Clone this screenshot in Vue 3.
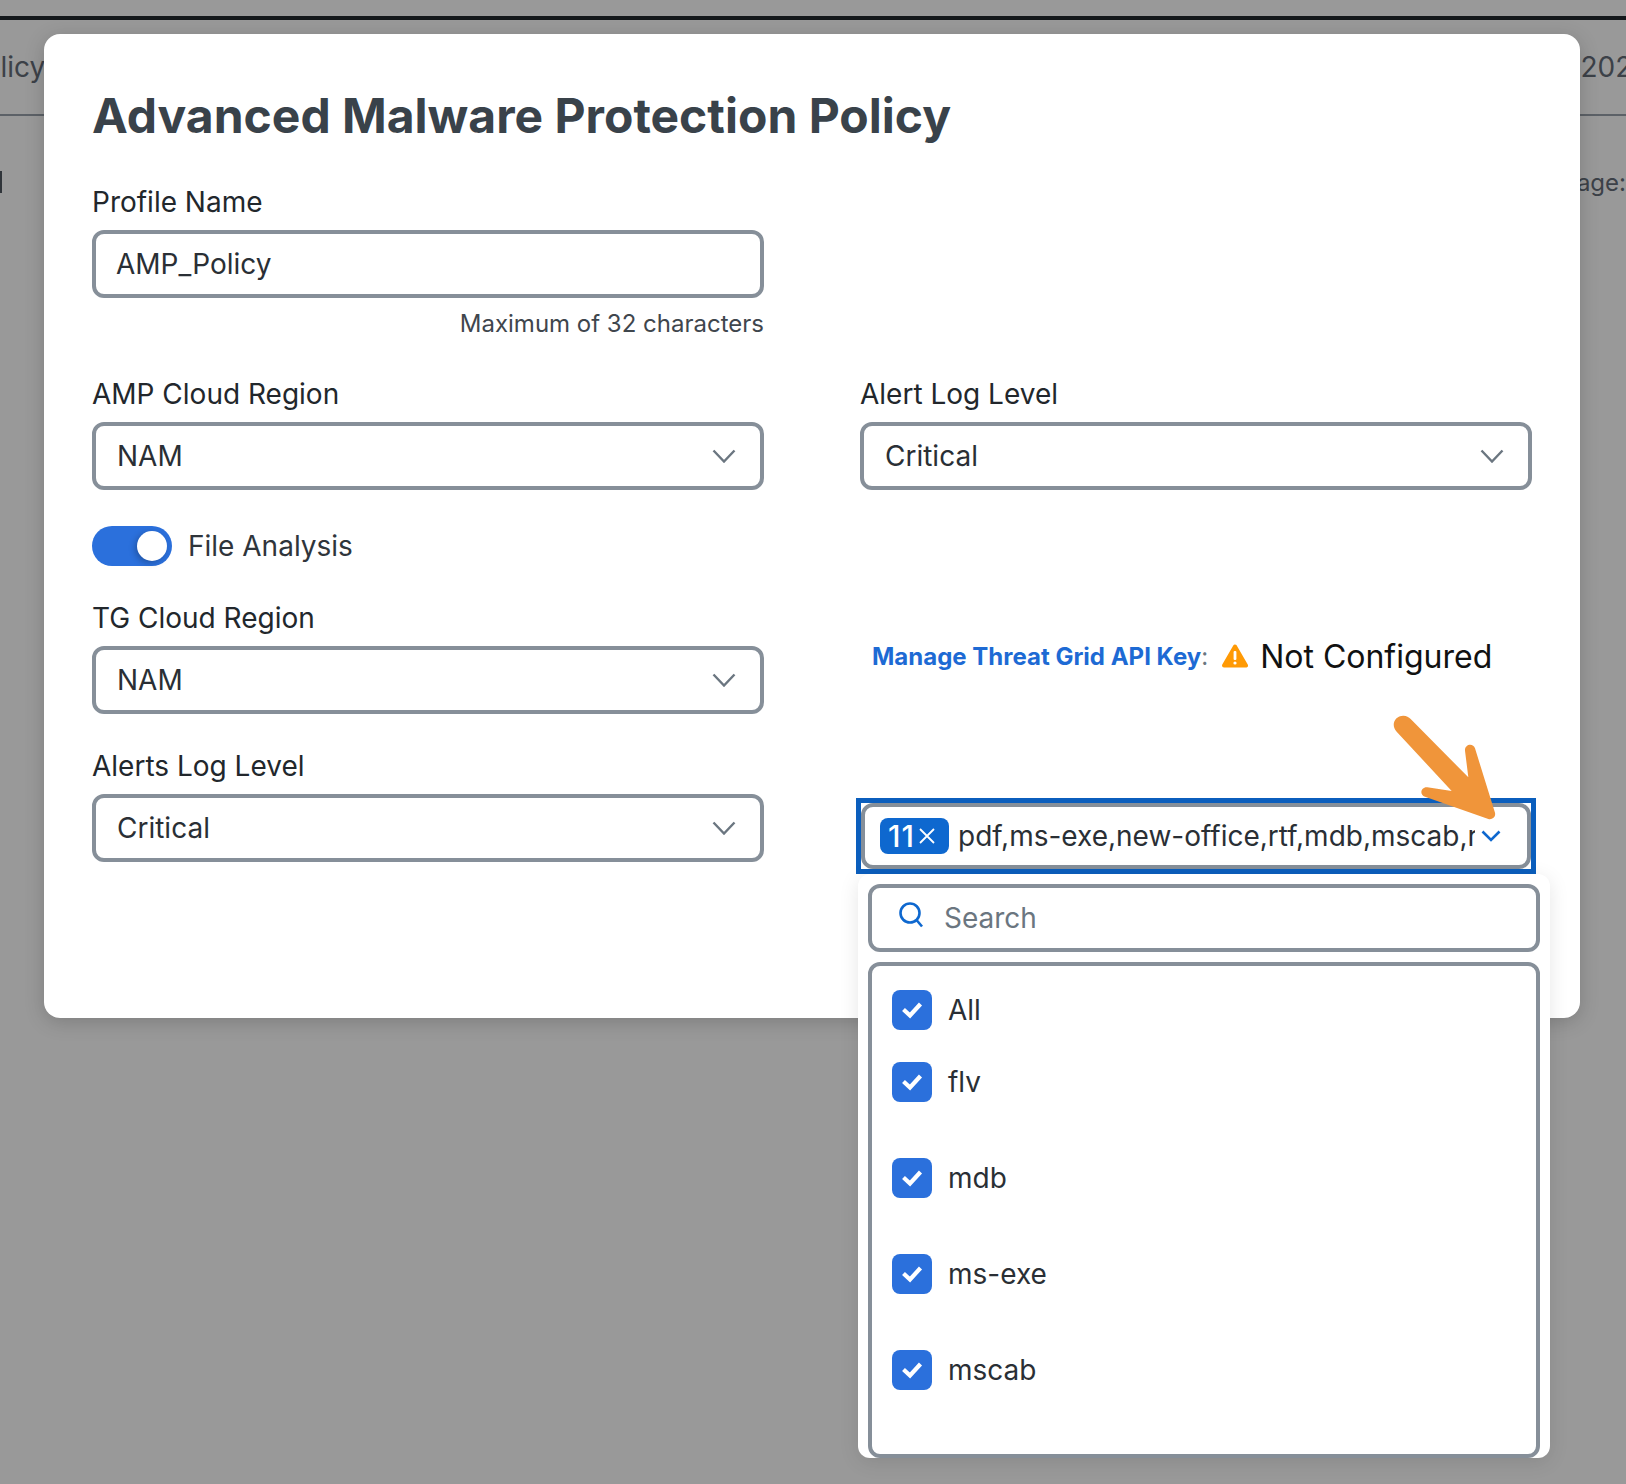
<template>
  <div class="page">
    <div class="topbar"></div>
    <div class="tabs">
      <span class="tab-left">Policy</span>
      <span class="tab-right">2024</span>
    </div>
    <div class="subrow">
      <span class="sub-mark"></span>
      <span class="sub-right">Page:</span>
    </div>

    <div class="modal">
      <h2 class="title">Advanced Malware Protection Policy</h2>

      <div class="grid">
        <div class="field">
          <label class="lbl">Profile Name</label>
          <div class="box">AMP_Policy</div>
          <div class="hint">Maximum of 32 characters</div>
        </div>
        <div></div>

        <div class="field row-b">
          <label class="lbl">AMP Cloud Region</label>
          <div class="box sel">
            <span>NAM</span>
            <svg class="chev" viewBox="0 0 24 14"><path d="M1.5 1.5 12 12.5 22.5 1.5" /></svg>
          </div>
        </div>
        <div class="field row-b">
          <label class="lbl">Alert Log Level</label>
          <div class="box sel">
            <span>Critical</span>
            <svg class="chev" viewBox="0 0 24 14"><path d="M1.5 1.5 12 12.5 22.5 1.5" /></svg>
          </div>
        </div>

        <div class="toggle-row">
          <span class="toggle"><span class="knob"></span></span>
          <span class="toggle-lbl">File Analysis</span>
        </div>
        <div></div>

        <div class="field row-c">
          <label class="lbl">TG Cloud Region</label>
          <div class="box sel">
            <span>NAM</span>
            <svg class="chev" viewBox="0 0 24 14"><path d="M1.5 1.5 12 12.5 22.5 1.5" /></svg>
          </div>
        </div>
        <div class="api-row">
          <a class="api-link">Manage Threat Grid API Key</a><span class="colon">:</span>
          <svg class="warn" viewBox="0 0 26 24">
            <path d="M13 2.5 24 21.5H2Z" fill="#ff9a05" stroke="#ff9a05" stroke-width="4" stroke-linejoin="round" />
            <rect x="11.6" y="7" width="2.8" height="9" rx="1" fill="#fff" />
            <circle cx="13" cy="19" r="1.6" fill="#fff" />
          </svg>
          <span class="api-state">Not Configured</span>
        </div>

        <div class="field row-d">
          <label class="lbl">Alerts Log Level</label>
          <div class="box sel">
            <span>Critical</span>
            <svg class="chev" viewBox="0 0 24 14"><path d="M1.5 1.5 12 12.5 22.5 1.5" /></svg>
          </div>
        </div>
        <div class="multi-wrap">
          <div class="multi-focus">
            <div class="multi">
              <span class="badge">11<svg class="badge-x" viewBox="0 0 18 18"><path d="M2 2 16 16M16 2 2 16" /></svg></span>
              <span class="multi-text">pdf,ms-exe,new-office,rtf,mdb,mscab,rar,zip,swf</span>
              <svg class="chev-blue" viewBox="0 0 20 12"><path d="M1.5 1.5 10 10 18.5 1.5" /></svg>
            </div>
          </div>

          <div class="panel">
            <div class="search">
              <svg class="search-ico" viewBox="0 0 26 28">
                <circle cx="12" cy="12" r="9.5" />
                <path d="M18.5 19 24 25.5" />
              </svg>
              <span>Search</span>
            </div>
            <div class="list">
              <div v-for="(o, i) in options" :key="o" :class="['opt', i === 0 ? 'opt-first' : '']">
                <span class="check">
                  <svg viewBox="0 0 22 18"><path d="M2.5 8.5 9 14.5 19.5 3" /></svg>
                </span>
                <span class="opt-lbl">{{ o }}</span>
              </div>
            </div>
          </div>

          <svg class="arrow" viewBox="0 0 858 600">
            <path d="M170 125C152 107 163 77 190 77 200 77 206 81 212 87L385 262 375 182C373 162 400 157 405 175L465 368C468 382 456 390 445 387L255 320C236 313 244 290 262 292L335 303Z" fill="#f0953a" />
          </svg>
        </div>
      </div>
    </div>
  </div>
</template>

<script setup>
const options = ['All', 'flv', 'mdb', 'ms-exe', 'mscab']
</script>

<style>
html, body { margin: 0; padding: 0; }
</style>

<style scoped>
.page {
  position: relative;
  width: 1626px;
  height: 1484px;
  overflow: hidden;
  background: #999;
  font-family: Inter, "Liberation Sans", sans-serif;
  color: #22272c;
}

.topbar {
  height: 4px;
  margin-top: 16px;
  background: #14181b;
}

.tabs {
  display: flex;
  justify-content: space-between;
  align-items: center;
  height: 94px;
  border-bottom: 2px solid #5c6167;
  font-size: 28px;
  color: #3c4148;
}
.tab-left { margin-left: -34px; }
.tab-right { margin-right: -24px; }

.subrow {
  display: flex;
  justify-content: space-between;
  align-items: center;
  height: 30px;
  margin-top: 51px;
  font-size: 24px;
  color: #3c4148;
}
.sub-mark { width: 2px; height: 22px; background: #30353a; }

.modal {
  position: absolute;
  left: 44px;
  top: 34px;
  width: 1536px;
  height: 984px;
  box-sizing: border-box;
  padding: 50px 48px 48px;
  background: #fff;
  border-radius: 16px;
  box-shadow: 0 4px 20px rgba(0, 0, 0, .18);
}

.title {
  margin: 0;
  font-size: 48px;
  line-height: 64px;
  font-weight: 700;
  color: #39424a;
}

.grid {
  display: grid;
  grid-template-columns: 672px 672px;
  column-gap: 96px;
  margin-top: 36px;
}

.field { display: flex; flex-direction: column; }

.lbl {
  font-size: 28px;
  line-height: 36px;
  margin-bottom: 10px;
  color: #22272c;
}

.box {
  box-sizing: border-box;
  height: 68px;
  padding: 0 20px;
  display: flex;
  align-items: center;
  border: 4px solid #868f99;
  border-radius: 12px;
  font-size: 28px;
  color: #2a2f35;
}

.sel { justify-content: space-between; padding-left: 21px; }

.chev { width: 24px; height: 14px; margin-right: 4px; fill: none; stroke: #6b7680; stroke-width: 2.4; }

.hint {
  align-self: flex-end;
  margin-top: 11px;
  font-size: 24px;
  line-height: 30px;
  color: #3f464d;
}

.row-b { margin-top: 37px; }

.toggle-row {
  display: flex;
  align-items: center;
  gap: 16px;
  margin-top: 36px;
  height: 40px;
}

.toggle {
  position: relative;
  width: 80px;
  height: 40px;
  border-radius: 20px;
  background: #2b70dc;
}

.knob {
  position: absolute;
  right: 5px;
  top: 5px;
  width: 30px;
  height: 30px;
  border-radius: 50%;
  background: #fff;
  box-shadow: -2px 2px 6px rgba(0, 0, 0, .25);
}

.toggle-lbl { font-size: 28px; color: #2f353b; }

.row-c { margin-top: 34px; }

.api-row {
  display: flex;
  align-items: center;
  margin-top: 67px;
  margin-left: 12px;
  height: 46px;
}

.api-link { font-size: 24px; font-weight: 700; color: #1d6ad4; }
.colon { font-size: 24px; color: #6b7680; }
.warn { width: 26px; height: 24px; margin-left: 14px; }
.api-state { font-size: 32px; color: #111; margin-left: 12px; }

.row-d { margin-top: 34px; }

.multi-wrap { position: relative; margin-top: 89px; height: 68px; }

.multi-focus {
  position: absolute;
  left: -4px;
  top: -5px;
  width: 680px;
  height: 76px;
  box-sizing: border-box;
  border: 5px solid #0b5ebd;
}

.multi {
  box-sizing: border-box;
  width: 670px;
  height: 66px;
  display: flex;
  align-items: center;
  padding-left: 15px;
  border: 4px solid #868f99;
  border-radius: 12px;
  background: #fff;
}

.badge {
  flex: none;
  box-sizing: border-box;
  width: 69px;
  height: 36px;
  padding-left: 8px;
  display: flex;
  align-items: center;
  gap: 3px;
  background: #0e68cf;
  border-radius: 8px;
  color: #fff;
  font-size: 30px;
  font-weight: 500;
  letter-spacing: 1px;
}

.badge-x { width: 18px; height: 18px; fill: none; stroke: #fff; stroke-width: 1.8; }

.multi-text {
  width: 517px;
  margin-left: 9px;
  overflow: hidden;
  white-space: nowrap;
  font-size: 28px;
  color: #2a2f35;
}

.chev-blue { flex: none; width: 20px; height: 12px; margin-left: 6px; fill: none; stroke: #0e68cf; stroke-width: 2.6; }

.panel {
  position: absolute;
  left: -2px;
  top: 71px;
  width: 692px;
  height: 584px;
  box-sizing: border-box;
  padding: 10px 10px 0;
  background: #fff;
  border-radius: 12px;
  overflow: hidden;
  box-shadow: 0 4px 20px rgba(0, 0, 0, .1);
}

.search {
  box-sizing: border-box;
  height: 68px;
  display: flex;
  align-items: center;
  padding-left: 26px;
  border: 4px solid #868f99;
  border-radius: 12px;
  font-size: 28px;
  color: #6b7680;
}

.search-ico { width: 26px; height: 28px; margin-right: 20px; margin-top: -6px; fill: none; stroke: #0e68cf; stroke-width: 2.6; }

.list {
  box-sizing: border-box;
  height: 496px;
  margin-top: 10px;
  padding: 24px 20px 0;
  border: 4px solid #868f99;
  border-radius: 12px;
}

.opt { display: flex; gap: 16px; height: 96px; font-size: 28px; color: #2a2f35; }
.opt-first { height: 72px; }

.opt-lbl { height: 40px; line-height: 40px; }

.check {
  width: 40px;
  height: 40px;
  display: flex;
  align-items: center;
  justify-content: center;
  background: #2b70dc;
  border-radius: 8px;
}
.check svg { width: 22px; height: 18px; fill: none; stroke: #fff; stroke-width: 4.2; }

.arrow {
  position: absolute;
  left: 480px;
  top: -113px;
  width: 286px;
  height: 200px;
  pointer-events: none;
}
</style>
